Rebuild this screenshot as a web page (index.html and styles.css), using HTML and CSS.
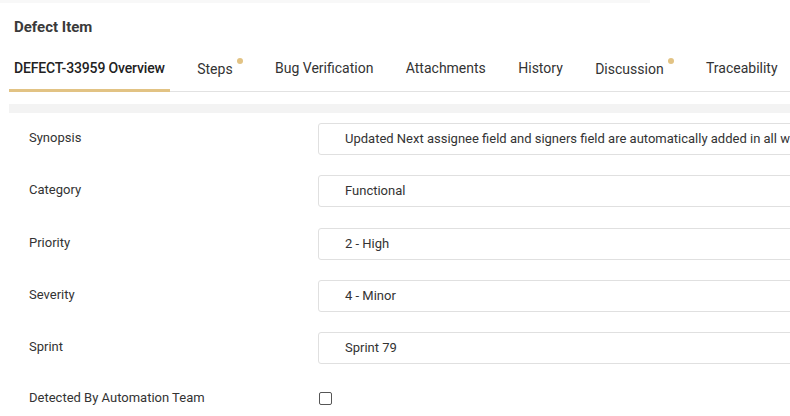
FILE: index.html
```html
<!DOCTYPE html>
<html>
<head>
<meta charset="utf-8">
<link rel="stylesheet" href="styles.css">
</head>
<body>
<div class="page">
  <div class="topstrip"></div>
  <h1 class="title">Defect Item</h1>
  <div class="content">
    <nav class="tabs">
      <div class="tab active">DEFECT-33959 Overview</div>
      <div class="tab">Steps<span class="dot"></span></div>
      <div class="tab">Bug Verification</div>
      <div class="tab">Attachments</div>
      <div class="tab">History</div>
      <div class="tab">Discussion<span class="dot"></span></div>
      <div class="tab">Traceability</div>
    </nav>
    <div class="greybar"></div>
    <div class="form">
      <div class="row">
        <div class="label">Synopsis</div>
        <div class="field">Updated Next assignee field and signers field are automatically added in all workflow transitions</div>
      </div>
      <div class="row">
        <div class="label">Category</div>
        <div class="field">Functional</div>
      </div>
      <div class="row">
        <div class="label">Priority</div>
        <div class="field">2 - High</div>
      </div>
      <div class="row">
        <div class="label">Severity</div>
        <div class="field">4 - Minor</div>
      </div>
      <div class="row">
        <div class="label">Sprint</div>
        <div class="field">Sprint 79</div>
      </div>
      <div class="row row-check">
        <div class="label">Detected By Automation Team</div>
        <div class="checkbox"></div>
      </div>
    </div>
  </div>
</div>
</body>
</html>
```

FILE: styles.css
```css
html, body {
  margin: 0;
  padding: 0;
  background: #fff;
  overflow: hidden;
}
.page {
  width: 790px;
  height: 416px;
  overflow: hidden;
  font-family: Roboto, "Liberation Sans", sans-serif;
  color: #333;
}
.topstrip {
  width: 650px;
  height: 3px;
  background: #f8f8f8;
}
.title {
  margin: 0;
  padding: 14px 0 0 14px;
  font-size: 15px;
  line-height: 20px;
  font-weight: 700;
  color: #3a3a3a;
}
.content {
  margin-left: 9px;
}
.tabs {
  display: flex;
  margin-top: 10px;
  border-bottom: 1px solid #e2e2e2;
  width: 900px;
  height: 44px;
  box-sizing: content-box;
}
.tab {
  padding: 11px 5px 0;
  margin-right: 22.4px;
  font-size: 14px;
  line-height: 20px;
  color: #333;
  white-space: nowrap;
}
.tab.active {
  font-weight: 500;
  letter-spacing: -0.15px;
  color: #222;
  padding-bottom: 11px;
  border-bottom: 3px solid #e2c384;
  margin-bottom: -1px;
}
.dot {
  display: inline-block;
  width: 6px;
  height: 6px;
  border-radius: 50%;
  background: #e2c384;
  margin-left: 4px;
  vertical-align: 10px;
}
.greybar {
  margin-top: 12px;
  height: 9px;
  background: #f3f3f3;
  width: 900px;
}
.form {
  padding-top: 10px;
  display: flex;
  flex-direction: column;
  gap: 20.25px;
}
.row {
  display: grid;
  grid-template-columns: 289px 700px;
  padding-left: 20px;
  align-items: start;
}
.label {
  font-size: 13px;
  line-height: 16px;
  padding-top: 7px;
  color: #333;
  white-space: nowrap;
}
.field {
  box-sizing: border-box;
  height: 32px;
  border: 1px solid #e0e0e0;
  border-radius: 3px;
  padding-left: 26px;
  font-size: 13px;
  line-height: 30px;
  color: #333;
  white-space: nowrap;
  overflow: hidden;
}
.row-check {
  align-items: center;
  height: 28px;
}
.row-check .label {
  padding-top: 0;
}
.checkbox {
  box-sizing: border-box;
  width: 13px;
  height: 13px;
  margin-left: 1px;
  border: 1px solid #555;
  border-radius: 2px;
  background: #fff;
}
```
